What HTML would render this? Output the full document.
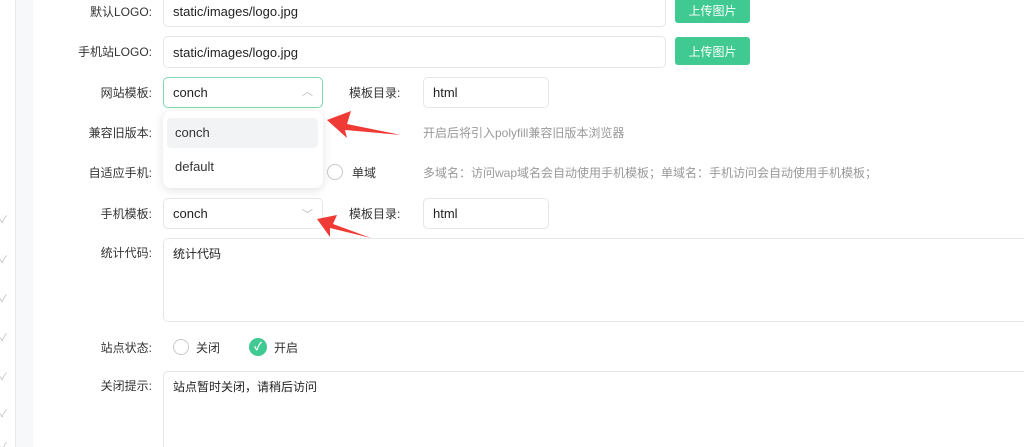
<!DOCTYPE html>
<html style="overflow:hidden;height:447px"><head><meta charset="utf-8"><style>
*{box-sizing:border-box;margin:0;padding:0}
body{width:1024px;height:447px;overflow:hidden;background:#fff;font-family:"Liberation Sans","Noto Sans CJK SC",sans-serif;font-size:13px;color:#333;position:relative}
.a{position:absolute}
.lbl{position:absolute;right:872px;font-size:12px;color:#333;white-space:nowrap}
.inp{position:absolute;border:1px solid #e4e6ea;border-radius:5px;background:#fff;padding-left:9px;font-size:13px;color:#222;display:flex;align-items:center}
.btn{position:absolute;background:#40c990;color:#fff;border-radius:3px;font-size:12px;display:flex;align-items:center;justify-content:center;width:75px}
.hint{position:absolute;font-size:12px;color:#999;white-space:nowrap}
.chk{position:absolute;left:0;color:#bbb;font-size:10px}
.radio{position:absolute;width:16px;height:16px;border:1px solid #c8c8c8;border-radius:50%;background:#fff}
</style></head><body>
<div class="a" style="left:15px;top:0;width:1px;height:447px;background:#e8e8ec"></div>
<div class="a" style="left:16px;top:0;width:17px;height:447px;background:#f7f8fa"></div>
<div class="chk" style="top:211px">✓</div><div class="chk" style="top:251px">✓</div><div class="chk" style="top:290px">✓</div><div class="chk" style="top:329px">✓</div><div class="chk" style="top:368px">✓</div><div class="chk" style="top:405px">✓</div><div class="chk" style="top:438px">✓</div>

<div class="lbl" style="top:3px">默认LOGO:</div>
<div class="inp" style="left:163px;top:-5px;width:503px;height:32px">static/images/logo.jpg</div>
<div class="btn" style="left:675px;top:-2px;height:25px">上传图片</div>

<div class="lbl" style="top:43px">手机站LOGO:</div>
<div class="inp" style="left:163px;top:36px;width:503px;height:32px">static/images/logo.jpg</div>
<div class="btn" style="left:675px;top:37px;height:28px">上传图片</div>

<div class="lbl" style="top:84px">网站模板:</div>
<div class="inp" style="left:163px;top:77px;width:160px;height:31px;border-color:#7fd8b0">conch<span class="a" style="left:138px;top:5px;color:#bbb;font-size:11px">︿</span></div>
<div class="a" style="left:349px;top:84px;font-size:12px">模板目录:</div>
<div class="inp" style="left:423px;top:77px;width:126px;height:31px">html</div>

<div class="lbl" style="top:124px">兼容旧版本:</div>
<div class="hint" style="left:423px;top:124px">开启后将引入polyfill兼容旧版本浏览器</div>

<div class="lbl" style="top:164px">自适应手机:</div>
<div class="radio" style="left:327px;top:164px"></div>
<div class="a" style="left:352px;top:164px;font-size:12px">单域</div>
<div class="hint" style="left:423px;top:164px">多域名：访问wap域名会自动使用手机模板；单域名：手机访问会自动使用手机模板；</div>

<div class="a" style="left:163px;top:111px;width:160px;height:77px;background:#fff;border-radius:8px;box-shadow:0 2px 10px rgba(0,0,0,.12)">
<div class="a" style="left:4px;top:7px;width:151px;height:30px;background:#f2f3f5;border-radius:4px;padding:7px 0 0 8px;font-size:13px">conch</div>
<div class="a" style="left:12px;top:48px;font-size:13px">default</div>
</div>

<div class="lbl" style="top:205px">手机模板:</div>
<div class="inp" style="left:163px;top:198px;width:160px;height:31px">conch<span class="a" style="left:138px;top:7px;color:#bbb;font-size:11px">﹀</span></div>
<div class="a" style="left:349px;top:205px;font-size:12px">模板目录:</div>
<div class="inp" style="left:423px;top:198px;width:126px;height:31px">html</div>

<div class="lbl" style="top:244px">统计代码:</div>
<div class="inp" style="left:163px;top:238px;width:880px;height:84px;align-items:flex-start;padding-top:6px;font-size:12px">统计代码</div>

<div class="lbl" style="top:339px">站点状态:</div>
<div class="radio" style="left:173px;top:339px"></div>
<div class="a" style="left:196px;top:339px;font-size:12px">关闭</div>
<div class="a" style="left:249px;top:338px;width:18px;height:18px;border-radius:50%;background:#40c990;color:#fff;font-size:11px;text-align:center;line-height:18px;font-weight:bold">✓</div>
<div class="a" style="left:274px;top:339px;font-size:12px">开启</div>

<div class="lbl" style="top:377px">关闭提示:</div>
<div class="inp" style="left:163px;top:371px;width:880px;height:76px;border-bottom:none;border-radius:5px 0 0 0;align-items:flex-start;padding-top:6px;font-size:12px">站点暂时关闭，请稍后访问</div>

<svg class="a" style="left:0;top:0" width="1024" height="447">
<polygon points="327,120 351,111 347,124 401,135 345,130 347,138" fill="#f03a36"/>
<polygon points="317,219 337,215 333,224 371,238 330,228 330,237" fill="#f03a36"/>
</svg>
</body></html>
